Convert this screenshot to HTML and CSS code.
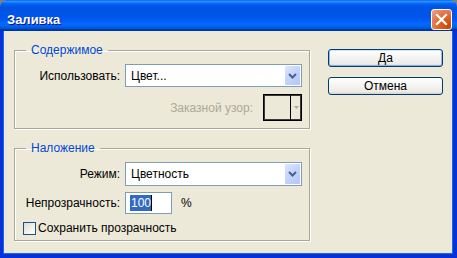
FILE: index.html
```html
<!DOCTYPE html>
<html lang="ru">
<head>
<meta charset="utf-8">
<title>Заливка</title>
<link rel="stylesheet" href="styles.css">
</head>
<body>
<div class="window">
  <div class="titlebar">
    <span class="title">Заливка</span>
    <button class="close" aria-label="Закрыть">
      <svg width="13" height="13" viewBox="0 0 13 13"><path d="M2 2 L11 11 M11 2 L2 11" stroke="#fff" stroke-width="2.2" stroke-linecap="square"/></svg>
    </button>
  </div>
  <div class="client">
    <div class="main">
      <fieldset class="group g1">
        <legend>Содержимое</legend>
        <div class="grid first">
          <span class="lbl">Использовать:</span>
          <div class="select"><span class="val">Цвет...</span><span class="arrow"><svg width="9" height="6" viewBox="0 0 9 6"><path d="M1 1 L4.5 4.5 L8 1" fill="none" stroke="#4D6185" stroke-width="2"/></svg></span></div>
        </div>
        <div class="pattern-row">
          <span class="lbl disabled">Заказной узор:</span>
          <div class="pattern"><span class="swatch"></span><span class="pat-arrow"><svg width="5" height="3" viewBox="0 0 5 3"><path d="M0 0 H5 L2.5 3 Z" fill="#ACA899"/></svg></span></div>
        </div>
      </fieldset>
      <fieldset class="group g2">
        <legend>Наложение</legend>
        <div class="grid first">
          <span class="lbl">Режим:</span>
          <div class="select tall"><span class="val">Цветность</span><span class="arrow"><svg width="9" height="6" viewBox="0 0 9 6"><path d="M1 1 L4.5 4.5 L8 1" fill="none" stroke="#4D6185" stroke-width="2"/></svg></span></div>
        </div>
        <div class="grid second">
          <span class="lbl">Непрозрачность:</span>
          <div class="opacity"><div class="input"><span class="sel">100</span><span class="caret"></span></div><span class="pct">%</span></div>
        </div>
        <label class="check-row"><span class="checkbox"></span><span>Сохранить прозрачность</span></label>
      </fieldset>
    </div>
    <div class="buttons">
      <button class="btn default">Да</button>
      <button class="btn">Отмена</button>
    </div>
  </div>
</div>
</body>
</html>
```
FILE: styles.css
```css
html, body {
  margin: 0;
  padding: 0;
  background: #7f7f7f;
}
body {
  font-family: "Liberation Sans", Arial, sans-serif;
  font-size: 12px;
  color: #000;
}
.window {
  width: 457px;
  height: 258px;
  display: flex;
  flex-direction: column;
}
.titlebar {
  height: 31px;
  box-sizing: border-box;
  padding: 8px 5px 0 7px;
  display: flex;
  align-items: center;
  justify-content: space-between;
  border-radius: 7px 7px 0 0;
  background: linear-gradient(180deg, #0058ee 0%, #3593ff 4%, #288eff 6%, #127dff 8%, #036ffc 10%, #0262ee 14%, #0057e5 20%, #0054e3 24%, #0055eb 56%, #005bf5 66%, #026afe 76%, #0062ef 86%, #0052d6 92%, #0040ab 94%, #003092 100%);
}
.title {
  color: #fff;
  font-weight: bold;
  font-size: 13px;
  text-shadow: 1px 1px 0 #0f1089;
}
.close {
  width: 21px;
  height: 21px;
  padding: 0;
  border: 1px solid #fff;
  border-radius: 3px;
  background: radial-gradient(circle at 85% 85%, #cc4600 0%, #dc6527 40%, #e77e57 70%, #f0a48a 100%);
  display: flex;
  align-items: center;
  justify-content: center;
}
.client {
  flex: 1;
  background: #ece9d8;
  border-left: 3px solid #0831d9;
  border-right: 4px solid #0831d9;
  border-bottom: 4px solid #0831d9;
  box-shadow: inset 1px 0 0 #166aee, inset -1px 0 0 #166aee, inset 0 -1px 0 #166aee;
  padding: 12px 0 0 11px;
  display: flex;
  gap: 18px;
}
.main {
  width: 296px;
  display: flex;
  flex-direction: column;
}
.group {
  margin: 0;
  padding: 0 7px 7px 0;
  border: 1px solid #aca899;
  box-shadow: inset 1px 1px 0 #fff, 1px 1px 0 #fff;
  min-width: 0;
}
.group legend {
  margin-left: 11px;
  padding: 0 5px;
  color: #0046d5;
  line-height: 14px;
}
.g2 {
  margin-top: 12px;
  padding-bottom: 5px;
}
.grid {
  display: grid;
  grid-template-columns: 1fr 177px;
  column-gap: 5px;
  align-items: center;
}
.grid.first { margin-top: 7px; }
.grid.second { margin-top: 6px; }
.lbl { justify-self: end; white-space: nowrap; }
.disabled { color: #aca899; }
.select {
  height: 23px;
  box-sizing: border-box;
  border: 1px solid #7f9db9;
  background: #fff;
  display: flex;
  align-items: center;
  justify-content: space-between;
  padding: 0 1px 0 5px;
}
.select.tall { height: 24px; }
.arrow {
  width: 15px;
  height: calc(100% - 2px);
  box-sizing: border-box;
  border-radius: 1px;
  background: linear-gradient(135deg, #dce6fd 0%, #c3d3fd 50%, #b3c6f7 100%);
  display: flex;
  align-items: center;
  justify-content: center;
}
.pattern-row {
  margin-top: 7px;
  display: flex;
  justify-content: flex-end;
  align-items: center;
  gap: 10px;
}
.pattern {
  width: 39px;
  height: 27px;
  box-sizing: border-box;
  border: 1px solid #000;
  box-shadow: inset 1px 1px 0 #3a3a3a, inset -1px -1px 0 #3a3a3a;
  display: flex;
}
.swatch {
  width: 26px;
  border-right: 1px solid #000;
}
.pat-arrow {
  flex: 1;
  display: flex;
  align-items: center;
  justify-content: center;
}
.opacity {
  display: flex;
  align-items: center;
  gap: 9px;
}
.input {
  width: 47px;
  height: 22px;
  box-sizing: border-box;
  border: 1px solid #7f9db9;
  background: #fff;
  display: flex;
  align-items: center;
  padding-left: 4px;
}
.sel {
  background: #316ac5;
  color: #fff;
  line-height: 16px;
  padding-left: 1px;
}
.caret {
  width: 1px;
  height: 16px;
  background: #000;
}
.check-row {
  margin: 7px 0 0 8px;
  height: 14px;
  display: flex;
  align-items: center;
  gap: 2px;
}
.checkbox {
  width: 13px;
  height: 13px;
  box-sizing: border-box;
  border: 1px solid #1c5180;
  background: linear-gradient(135deg, #dcdcd7 0%, #f0f0ea 50%, #fff 100%);
}
.buttons {
  width: 115px;
  margin-top: 6px;
  display: flex;
  flex-direction: column;
  gap: 10px;
}
.btn {
  height: 18px;
  padding: 0;
  border: 1px solid #003c74;
  border-radius: 3px;
  background: linear-gradient(180deg, #fff 0%, #ecebe6 86%, #d6d0c5 100%);
  font-family: "Liberation Sans", Arial, sans-serif;
  font-size: 12px;
  color: #000;
}
.btn.default {
  box-shadow: inset 0 1px 0 #cee7ff, inset 1px 0 0 #98b8ea, inset -1px 0 0 #98b8ea, inset 0 -1px 0 #89ade4;
}
```
